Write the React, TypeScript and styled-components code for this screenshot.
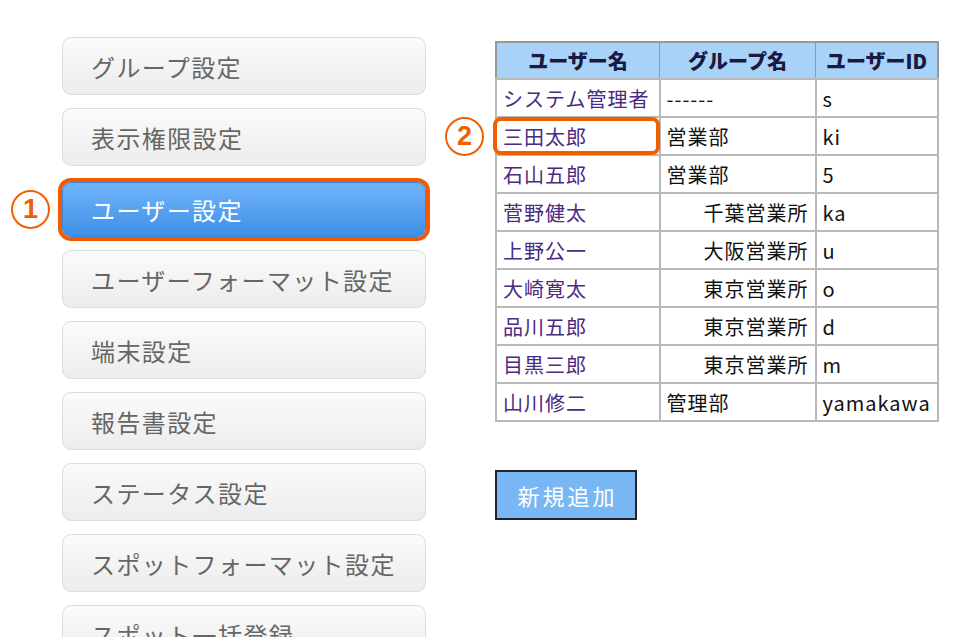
import styled, { createGlobalStyle } from 'styled-components'

const GlobalStyle = createGlobalStyle`
  html, body {
    margin: 0;
    padding: 0;
    background: #fff;
    font-family: "Noto Sans CJK JP", "Noto Sans", sans-serif;
  }
`

const Page = styled.div`
  display: flex;
  align-items: flex-start;
  width: 963px;
  height: 637px;
  overflow: hidden;
`

const Menu = styled.div`
  display: flex;
  flex-direction: column;
  gap: 13px;
  width: 364px;
  padding: 37px 0 0 62px;
`

const MenuItem = styled.div<{ $active?: boolean }>`
  position: relative;
  box-sizing: border-box;
  flex-shrink: 0;
  display: flex;
  align-items: center;
  padding-left: 28px;
  border-radius: 9px;
  font-size: 24px;
  letter-spacing: 1.4px;
  border: 1px solid ${(p) => (p.$active ? '#3a86dc' : '#dcdcdc')};
  color: ${(p) => (p.$active ? '#fff' : '#666')};
  background: ${(p) =>
    p.$active
      ? 'linear-gradient(#72b4fa, #3d8fe6)'
      : 'linear-gradient(#fbfbfb, #ececec)'};
  box-shadow: ${(p) => (p.$active ? '0 0 0 4px #f05a00' : 'none')};
  margin-top: ${(p) => (p.$active ? '3px' : '0')};
  height: ${(p) => (p.$active ? '55px' : '58px')};
`

const Mark = styled.span<{ $left: number; $top: number }>`
  position: absolute;
  left: ${(p) => p.$left}px;
  top: ${(p) => p.$top}px;
  width: 39px;
  height: 39px;
  box-sizing: border-box;
  border: 2px solid #f06000;
  border-radius: 50%;
  color: #f06000;
  font-size: 27px;
  font-weight: 700;
  letter-spacing: 0;
  font-family: "Liberation Sans", sans-serif;
  display: flex;
  align-items: center;
  justify-content: center;
  line-height: 1;
`

const Right = styled.div`
  display: flex;
  flex-direction: column;
  align-items: flex-start;
  gap: 48px;
  padding: 41px 0 0 69px;
`

const Table = styled.table`
  border-collapse: collapse;
  border: 2px solid #999;
  font-size: 20px;
  letter-spacing: 1px;
`

const Th = styled.th<{ $w: number }>`
  width: ${(p) => p.$w}px;
  height: 35px;
  padding: 0 6px;
  background: #a9d2f9;
  color: #1a1a40;
  font-weight: 900;
  letter-spacing: 0;
  border: 1px solid #999;
  text-align: center;
`

const Td = styled.td<{ $align?: string; $link?: boolean }>`
  position: relative;
  height: 36px;
  padding: 0 6px;
  border: 2px solid #b8b8b8;
  text-align: ${(p) => p.$align || 'left'};
  color: ${(p) => (p.$link ? '#4b2a82' : '#111')};
  white-space: nowrap;
`

const Highlight = styled.span`
  position: absolute;
  left: -4px;
  right: -1px;
  top: -1px;
  bottom: -1px;
  border: 4px solid #f06000;
  border-radius: 8px;
`

const AddButton = styled.button`
  width: 142px;
  height: 50px;
  background: #79b7f4;
  border: 2px solid #223;
  color: #fff;
  font-size: 22px;
  letter-spacing: 3px;
  font-family: "Noto Sans CJK JP", sans-serif;
  padding: 0 0 0 3px;
`

const menu = [
  'グループ設定',
  '表示権限設定',
  'ユーザー設定',
  'ユーザーフォーマット設定',
  '端末設定',
  '報告書設定',
  'ステータス設定',
  'スポットフォーマット設定',
  'スポット一括登録',
]

const rows = [
  ['システム管理者', '------', 's', 'left'],
  ['三田太郎', '営業部', 'ki', 'left'],
  ['石山五郎', '営業部', '5', 'left'],
  ['菅野健太', '千葉営業所', 'ka', 'right'],
  ['上野公一', '大阪営業所', 'u', 'right'],
  ['大崎寛太', '東京営業所', 'o', 'right'],
  ['品川五郎', '東京営業所', 'd', 'right'],
  ['目黒三郎', '東京営業所', 'm', 'right'],
  ['山川修二', '管理部', 'yamakawa', 'left'],
]

export default function App() {
  return (
    <>
      <GlobalStyle />
      <Page>
        <Menu>
          {menu.map((label, i) => (
            <MenuItem key={label} $active={i === 2}>
              {label}
              {i === 2 && (
                <Mark $left={-52} $top={7}>
                  1
                </Mark>
              )}
            </MenuItem>
          ))}
        </Menu>
        <Right>
          <Table>
            <thead>
              <tr>
                <Th $w={150}>ユーザー名</Th>
                <Th $w={143}>グループ名</Th>
                <Th $w={109}>ユーザーID</Th>
              </tr>
            </thead>
            <tbody>
              {rows.map(([name, group, id, align], i) => (
                <tr key={name}>
                  <Td $link>
                    {name}
                    {i === 1 && (
                      <>
                        <Highlight />
                        <Mark $left={-52} $top={-1}>
                          2
                        </Mark>
                      </>
                    )}
                  </Td>
                  <Td $align={align}>{group}</Td>
                  <Td>{id}</Td>
                </tr>
              ))}
            </tbody>
          </Table>
          <AddButton>新規追加</AddButton>
        </Right>
      </Page>
    </>
  )
}
